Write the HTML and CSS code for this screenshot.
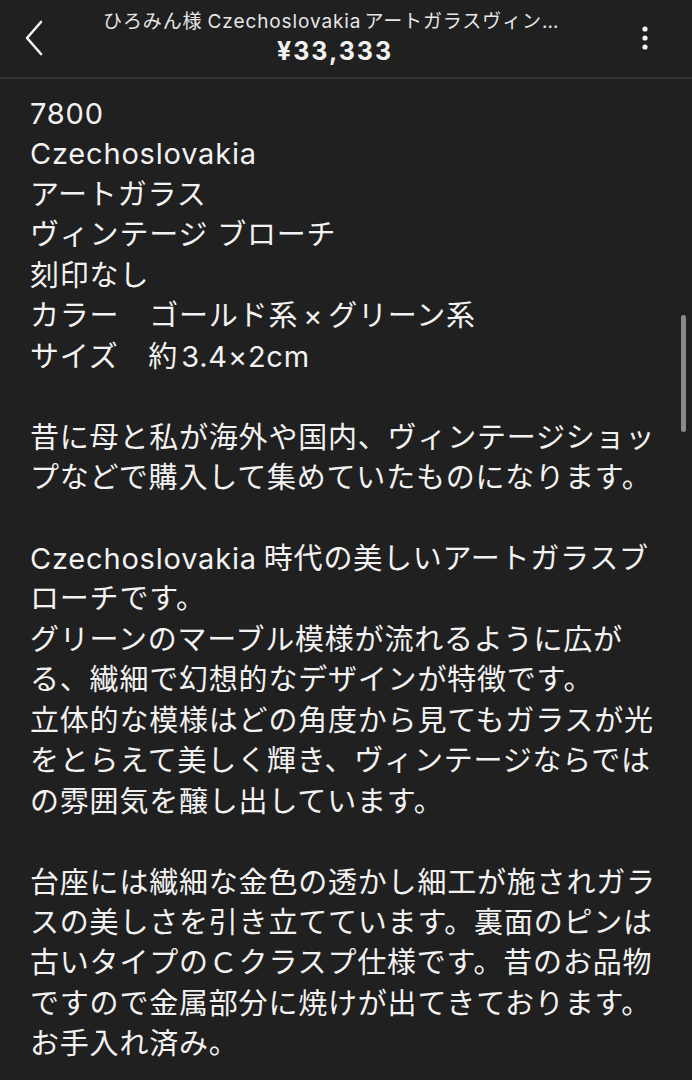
FILE: index.html
```html
<!DOCTYPE html>
<html lang="ja">
<head>
<meta charset="utf-8">
<link rel="stylesheet" href="styles.css">
</head>
<body>
<div class="app">
  <header class="topbar">
    <button class="icon-btn back" aria-label="戻る">
      <svg width="20" height="36" viewBox="0 0 20 36"><path d="M17 2 L3 18 L17 34" fill="none" stroke="#f2f2f2" stroke-width="2.6" stroke-linecap="round" stroke-linejoin="round"/></svg>
    </button>
    <div class="titles">
      <div class="title">ひろみん様<span class="lat">Czechoslovakia</span>アートガラスヴィンテージ ブローチ</div>
      <div class="price">¥33,333</div>
    </div>
    <button class="icon-btn more" aria-label="メニュー">
      <svg width="8" height="26" viewBox="0 0 8 26"><circle cx="4" cy="4" r="2.6" fill="#f2f2f2"/><circle cx="4" cy="13" r="2.6" fill="#f2f2f2"/><circle cx="4" cy="22" r="2.6" fill="#f2f2f2"/></svg>
    </button>
  </header>
  <main class="content">
    <p class="para">7800<br>Czechoslovakia<br>アートガラス<br>ヴィンテージ ブローチ<br>刻印なし<br>カラー　ゴールド系<span class="times">×</span>グリーン系<br>サイズ　約<span class="lat-l">3.4×2cm</span></p>
    <p class="para">昔に母と私が海外や国内、ヴィンテージショッ<br>プなどで購入して集めていたものになります。</p>
    <p class="para"><span class="lat-r">Czechoslovakia</span>時代の美しいアートガラスブ<br>ローチです。<br>グリーンのマーブル模様が流れるように広が<br>る、繊細で幻想的なデザインが特徴です。<br>立体的な模様はどの角度から見てもガラスが光<br>をとらえて美しく輝き、ヴィンテージならでは<br>の雰囲気を醸し出しています。</p>
    <p class="para">台座には繊細な金色の透かし細工が施されガラ<br>スの美しさを引き立てています。裏面のピンは<br>古いタイプのＣクラスプ仕様です。昔のお品物<br>ですので金属部分に焼けが出てきております。<br>お手入れ済み。</p>
  </main>
  <div class="scrollbar"></div>
</div>
</body>
</html>
```
FILE: styles.css
```css
html, body {
  margin: 0;
  padding: 0;
  background: #202020;
}
body {
  font-family: Inter, "Noto Sans CJK JP", sans-serif;
  color: #f2f2f2;
}
.app {
  position: relative;
  width: 692px;
  height: 1080px;
  overflow: hidden;
  background: #202020;
}
.topbar {
  height: 77px;
  display: flex;
  align-items: center;
  border-bottom: 2px solid #353535;
  padding: 0 35px 0 22px;
}
.icon-btn {
  background: none;
  border: 0;
  padding: 0;
  display: flex;
  align-items: center;
  justify-content: center;
}
.back {
  width: 24px;
  height: 40px;
  margin-top: -2px;
}
.more {
  width: 24px;
  height: 40px;
  margin-top: -2px;
}
.titles {
  flex: 1;
  min-width: 0;
  display: flex;
  flex-direction: column;
  align-items: center;
  padding: 0 66px 0 57px;
  margin-top: -2px;
}
.title {
  max-width: 100%;
  font-size: 19px;
  line-height: 24px;
  letter-spacing: 0.9px;
  color: #e6e6e6;
  white-space: nowrap;
  overflow: hidden;
  text-overflow: ellipsis;
}
.title .lat {
  margin: 0 3px 0 5px;
}
.price {
  font-size: 25px;
  line-height: 30px;
  font-weight: 700;
  letter-spacing: 2px;
  margin-top: 2px;
  color: #f2f2f2;
}
.content {
  padding: 15px 20px 0 30px;
}
.para {
  margin: 0 0 40.45px 0;
  font-size: 29px;
  line-height: 40.45px;
  letter-spacing: 0.8px;
  white-space: nowrap;
}
.lat-r {
  margin-right: 7px;
}
.lat-l {
  margin-left: 3px;
}
.times {
  margin: 0 5px;
}
.scrollbar {
  position: absolute;
  left: 681px;
  top: 315px;
  width: 5px;
  height: 117px;
  border-radius: 3px;
  background: #8a8a8a;
}
```
